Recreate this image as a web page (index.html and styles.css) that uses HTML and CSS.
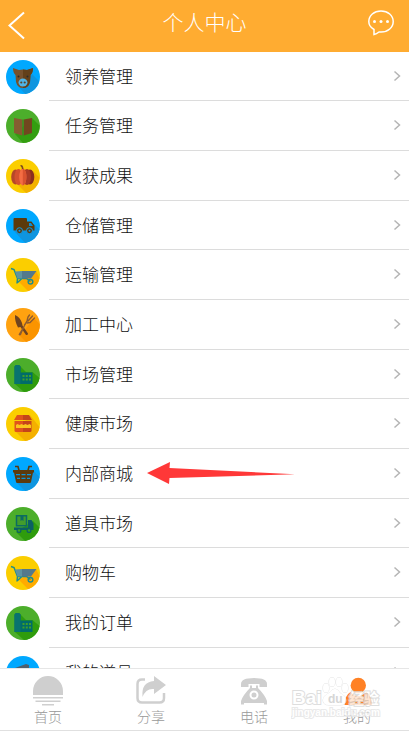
FILE: index.html
```html
<!DOCTYPE html>
<html lang="zh-CN">
<head>
<meta charset="utf-8">
<meta name="viewport" content="width=device-width, initial-scale=1">
<title>个人中心</title>
<link rel="stylesheet" href="styles.css">
</head>
<body>

<!-- icon shapes shared by the list -->
<svg class="defs" aria-hidden="true">
  <symbol id="chev" viewBox="0 0 8 12"><path d="M1.500 1.500 6.500 6l-5 4.500" fill="none" stroke="#b5b5b5" stroke-width="1.500"/></symbol>
  <symbol id="pig" viewBox="0 0 34 34">
    <circle cx="17" cy="17" r="17" fill="#00a8ff"/>
    <path d="M26 14 33 21A17 17 0 0 1 19 34L13 27z" fill="#0f95df"/>
    <path d="M7 8l6 2q4-1 8 0l6-2q0 5-2.500 7l-.5 7q-1.500 6-7 6t-7-6l-.5-7q-2.500-2-2.500-7z" fill="#76512d"/>
    <path d="M17 9.500q2 0 4 .5l6-2q0 5-2.500 7l-.5 7q-1.500 6-7 6z" fill="#634019"/>
    <ellipse cx="17" cy="22.500" rx="4.500" ry="4" fill="#4fb4e6"/>
    <circle cx="15.300" cy="22.500" r="1.100" fill="#5b4328"/><circle cx="18.700" cy="22.500" r="1.100" fill="#5b4328"/>
    <circle cx="12.500" cy="16.500" r="1" fill="#2b2b2b"/><circle cx="21.500" cy="16.500" r="1" fill="#2b2b2b"/>
  </symbol>
  <symbol id="book" viewBox="0 0 34 34">
    <circle cx="17" cy="17" r="17" fill="#4cae2b"/>
    <path d="M26 9l7.500 7.500A17 17 0 0 1 17 34l-8-9z" fill="#339e10"/>
    <path d="M8 9l8.300 1.500v16L8 24z" fill="#855c31"/>
    <path d="M26 9l-8.300 1.500v16L26 24z" fill="#71471f"/>
    <path d="M16.300 10.500h1.400v16h-1.400z" fill="#3d8b20"/>
  </symbol>
  <symbol id="pumpkin" viewBox="0 0 34 34">
    <circle cx="17" cy="17" r="17" fill="#fbce00"/>
    <path d="M27 12l6.500 6.500A17 17 0 0 1 20 34l-9-9z" fill="#f3b200"/>
    <ellipse cx="9.500" cy="18" rx="4.300" ry="7.500" fill="#b5472a"/>
    <ellipse cx="24" cy="18" rx="4.300" ry="7.500" fill="#8b2f1e"/>
    <ellipse cx="12.500" cy="18" rx="4" ry="8" fill="#d4512f"/>
    <ellipse cx="21" cy="18" rx="4" ry="8" fill="#a83a26"/>
    <ellipse cx="16.800" cy="18" rx="3.600" ry="8.500" fill="#f46d43"/>
    <path d="M16.800 9.500q3.600 1 3.600 8.500t-3.600 8.500z" fill="#d9532f"/>
    <path d="M14 6.500l2-.5q1.500 1.500 1.500 4H16q0-2-2-3.500z" fill="#7c4a20"/>
  </symbol>
  <symbol id="truck" viewBox="0 0 34 34">
    <circle cx="17" cy="17" r="17" fill="#00a8ff"/>
    <path d="M28 15l5.500 5.500A17 17 0 0 1 19 34L8 22z" fill="#0f95df"/>
    <path d="M8.500 9H20q1 0 1 1v2.500h4.500l3 4v5H7.500V10q0-1 1-1z" fill="#5c3a0c"/>
    <path d="M23 14h2l2 3h-4z" fill="#0b8fd6"/>
    <g fill="#5c3a0c" stroke="#0b9bea" stroke-width="1"><circle cx="13.500" cy="21.700" r="3"/><circle cx="23.500" cy="21.700" r="3"/></g>
    <g fill="#0b9bea"><circle cx="13.500" cy="21.700" r="1"/><circle cx="23.500" cy="21.700" r="1"/></g>
  </symbol>
  <symbol id="cart" viewBox="0 0 34 34">
    <circle cx="17" cy="17" r="17" fill="#fbce00"/>
    <path d="M30 13l3.500 7A17 17 0 0 1 22 33l-9-9z" fill="#ffab00"/>
    <path d="M5 10.500l3 1 3.500 9-.5 5M11.500 20.500h9l4 3M11 25l5-4.500" fill="none" stroke="#1f8d8b" stroke-width="1.500"/>
    <path d="M9 13.500l7-.5v7.500h-4.500z" fill="#5f93a0"/>
    <path d="M16 13h14.500l-5.500 7.500h-9z" fill="#54798c"/>
    <circle cx="24.500" cy="23.800" r="2.300" fill="none" stroke="#1f8d8b" stroke-width="1.500"/>
  </symbol>
  <symbol id="food" viewBox="0 0 34 34">
    <circle cx="17" cy="17" r="17" fill="#ffa210"/>
    <path d="M28 10l5.500 6A17 17 0 0 1 20 34l-6-6z" fill="#fb9400"/>
    <path d="M9 7q5 2 7 8l.5 2.500L22 25.500q0 2-2 1.500l-5.500-8-2.500.5Q8.500 13 9 7z" fill="#70441f"/>
    <path d="M20 15.500L15 27q-1.500 1-2.500-.5l6-10z" fill="#8d5b30"/>
    <path d="M18.500 17l2.500-4 1-4 1.500-2M21 15l3-.5 4.500-4.500M22 13l4.500-5" fill="none" stroke="#8d5b30" stroke-width="1.400" stroke-linecap="round"/>
  </symbol>
  <symbol id="market" viewBox="0 0 34 34">
    <circle cx="17" cy="17" r="17" fill="#4cae2b"/>
    <path d="M14 8l6 6h6.500l7 6A17 17 0 0 1 18 34l-9-8z" fill="#2f9c0d"/>
    <path d="M8.500 9q0-2 3-2t3 2v5.500h12V26h-18z" fill="#006c69"/>
    <path d="M8.500 9q0-2 3-2t3 2v17h-6z" fill="#08736f"/>
    <path d="M16.500 17h2v2h-2zM19.800 17h2v2h-2zM23 17h2v2h-2zM16.500 20.500h2v2h-2zM19.800 20.500h2v2h-2zM23 20.500h2v2h-2z" fill="#3f9e2a"/>
  </symbol>
  <symbol id="jar" viewBox="0 0 34 34">
    <circle cx="17" cy="17" r="17" fill="#fbce00"/>
    <path d="M24 8l9.500 12A17 17 0 0 1 19 34l-9-9z" fill="#f4b000"/>
    <path d="M11 8h6v5H8z" fill="#e0531c"/><path d="M17 8h6l3 5h-9z" fill="#c4441a"/>
    <path d="M8.500 14H17v11h-7q-1.500 0-1.500-1.500z" fill="#e0531c"/>
    <path d="M17 14h8.500v9.500q0 1.500-1.500 1.500h-7z" fill="#c4441a"/>
    <path d="M10 18l1.500-1 2 1 2-1 2 1 2-1 2 1 2-1 1.500 1v3H10z" fill="#fbc51c"/>
  </symbol>
  <symbol id="basket" viewBox="0 0 34 34">
    <circle cx="17" cy="17" r="17" fill="#00a8ff"/>
    <path d="M28 14l5.500 6A17 17 0 0 1 19 34l-8-8z" fill="#0f95df"/>
    <path d="M9 9.500h3l1 4M26 9.500h-3l-1 4" fill="none" stroke="#5c3a0c" stroke-width="1.600"/>
    <path d="M7 13h21v2.500h-1L25 25q0 1-1.500 1h-12Q10 26 10 25L8 15.500H7z" fill="#5c3a0c"/>
    <path d="M10 17h4v1.300h-4zM15.500 17h4v1.300h-4zM21 17h4v1.300h-4zM11 20.800h3v1.300h-3zM15.500 20.800h4v1.300h-4zM21 20.800h3v1.300h-3z" fill="#0b94dc"/>
  </symbol>
  <symbol id="props" viewBox="0 0 34 34">
    <circle cx="17" cy="17" r="17" fill="#4cae2b"/>
    <path d="M27 14l6.500 6.500A17 17 0 0 1 19 34l-9-9z" fill="#2f9c0d"/>
    <path d="M10.500 8.800h10v10h-10z" fill="#429c2c" stroke="#0b6b62" stroke-width="1.500"/>
    <path d="M14.500 9h3v5l-1.500-1-1.500 1z" fill="#0b6b62"/>
    <path d="M22 13h3.500l2 3.500V23H8v-2.500h14z" fill="#0b6064"/>
    <circle cx="13" cy="23.500" r="1.900" fill="#3b9b25" stroke="#0b6064" stroke-width="1.200"/>
    <circle cx="23" cy="23.500" r="1.900" fill="#3b9b25" stroke="#0b6064" stroke-width="1.200"/>
  </symbol>
  <symbol id="tool" viewBox="0 0 34 34">
    <circle cx="17" cy="17" r="17" fill="#00a8ff"/>
    <path d="M9 12l11-4 3 1v4l-5 2 4 9-3 2-5-10-5 1z" fill="#4f5f6e"/>
  </symbol>
</svg>

<div class="page">
  <header class="bar">
    <button class="bar-btn" aria-label="返回">
      <svg width="18" height="32" viewBox="0 0 18 32"><path d="M16 2.500 1.500 15.500 16 28.500" fill="none" stroke="#fff" stroke-width="2"/></svg>
    </button>
    <h1>个人中心</h1>
    <button class="bar-btn" aria-label="消息">
      <svg width="26" height="27" viewBox="0 0 26 27">
        <path d="M6 19.500C2.500 17.500.8 14.800.8 11.500.8 5.500 6 .9 13 .9s12.200 4.600 12.200 10.600S20 22 13 22h-2q-2.500 2-5 2.600z" fill="none" stroke="#fff" stroke-width="1.500"/>
        <circle cx="6.500" cy="11.500" r="1.500" fill="#fff"/><circle cx="13" cy="11.500" r="1.500" fill="#fff"/><circle cx="19.500" cy="11.500" r="1.500" fill="#fff"/>
      </svg>
    </button>
  </header>

  <main class="list">
    <a class="row" href="#"><svg class="ico"><use href="#pig"/></svg><span class="cell">领养管理<svg class="chev"><use href="#chev"/></svg></span></a>
    <a class="row" href="#"><svg class="ico"><use href="#book"/></svg><span class="cell">任务管理<svg class="chev"><use href="#chev"/></svg></span></a>
    <a class="row" href="#"><svg class="ico"><use href="#pumpkin"/></svg><span class="cell">收获成果<svg class="chev"><use href="#chev"/></svg></span></a>
    <a class="row" href="#"><svg class="ico"><use href="#truck"/></svg><span class="cell">仓储管理<svg class="chev"><use href="#chev"/></svg></span></a>
    <a class="row" href="#"><svg class="ico"><use href="#cart"/></svg><span class="cell">运输管理<svg class="chev"><use href="#chev"/></svg></span></a>
    <a class="row" href="#"><svg class="ico"><use href="#food"/></svg><span class="cell">加工中心<svg class="chev"><use href="#chev"/></svg></span></a>
    <a class="row" href="#"><svg class="ico"><use href="#market"/></svg><span class="cell">市场管理<svg class="chev"><use href="#chev"/></svg></span></a>
    <a class="row" href="#"><svg class="ico"><use href="#jar"/></svg><span class="cell">健康市场<svg class="chev"><use href="#chev"/></svg></span></a>
    <a class="row" href="#"><svg class="ico"><use href="#basket"/></svg><span class="cell">内部商城<svg class="arrow" width="148" height="22" viewBox="0 0 148 22"><path d="M0 11 23 0 22.500 6 148 12.300 22.500 16 22 22z" fill="#ff3838"/></svg><svg class="chev"><use href="#chev"/></svg></span></a>
    <a class="row" href="#"><svg class="ico"><use href="#props"/></svg><span class="cell">道具市场<svg class="chev"><use href="#chev"/></svg></span></a>
    <a class="row" href="#"><svg class="ico"><use href="#cart"/></svg><span class="cell">购物车<svg class="chev"><use href="#chev"/></svg></span></a>
    <a class="row" href="#"><svg class="ico"><use href="#market"/></svg><span class="cell">我的订单<svg class="chev"><use href="#chev"/></svg></span></a>
    <a class="row" href="#"><svg class="ico"><use href="#tool"/></svg><span class="cell">我的道具<svg class="chev"><use href="#chev"/></svg></span></a>
  </main>

  <nav class="tabs">
    <a class="tab" href="#">
      <svg width="30" height="30" viewBox="0 0 30 30" fill="#cfcfcf"><path d="M0 19v-4a15 15 0 0 1 30 0v4zM0 21h30v1.500H0zM2.500 24.500h25V26h-25zM9 28h12v1.500H9z"/></svg>
      首页
    </a>
    <a class="tab" href="#">
      <svg width="30" height="30" viewBox="0 0 30 30"><path d="M9 3.500H6Q1.500 3.500 1.500 8v14q0 4.500 4.500 4.500h17.500q4.500 0 4.500-4.500v-5" fill="none" stroke="#cfcfcf" stroke-width="2.500"/><path d="M18 0l12 9-12 9v-5q-8-1-11.500 8Q5 6 18 5z" fill="#cfcfcf"/></svg>
      分享
    </a>
    <a class="tab" href="#">
      <svg width="30" height="30" viewBox="0 0 30 30"><path d="M2 11V8q0-6 13-6t13 6v3h-7.500V8h-11v3z" fill="#cfcfcf"/><path d="M11 9.500h2V12h4V9.500h2V12q7 7 9 13v3.500h-3V27H5v1.500H2V25q2-6 9-13z" fill="#cfcfcf"/><circle cx="15" cy="19" r="3.500" fill="none" stroke="#fff" stroke-width="2"/></svg>
      电话
    </a>
    <a class="tab" href="#">
      <svg width="30" height="30" viewBox="0 0 30 30" fill="#ff8125"><circle cx="16.300" cy="9.500" r="7.700"/><path d="M8.500 16q3.500 4 7.800 4t7.800-4q5.500 3 6 13H2.500q.5-10 6-13z"/></svg>
      我的
    </a>
    <svg class="mark" width="92" height="48" viewBox="0 0 92 48" aria-hidden="true">
      <g fill="#fff" stroke="#dedede" stroke-width="1">
        <ellipse cx="35" cy="12" rx="3" ry="4.500"/><ellipse cx="41" cy="6" rx="3" ry="4.500"/><ellipse cx="48" cy="6" rx="3" ry="4.500"/><ellipse cx="54" cy="12" rx="3" ry="4.500"/>
        <path d="M44 13q3 0 5 4 6 3 6 7 0 5-6 5H38q-6 0-6-5 0-4 6-7 3-4 6-4z"/>
      </g>
      <text class="mark-name" x="1" y="28">Bai</text>
      <text class="mark-du" x="37" y="27">du</text>
      <text class="mark-cn" x="58" y="28">经验</text>
      <text class="mark-url" x="1" y="40">jingyan.baidu.com</text>
    </svg>
  </nav>
</div>

</body>
</html>
```
FILE: styles.css
```css
* {box-sizing: border-box;}
body {
  margin: 0;
  font-family: "Noto Sans CJK SC", sans-serif;
  background: #fff;
  color: #111;
}
a {text-decoration: none; color: inherit;}
svg {display: block; flex: none;}
.defs {position: absolute; width: 0; height: 0;}

.page {
  display: flex;
  flex-direction: column;
  height: 100vh;
}

/* top bar */
.bar {
  display: grid;
  grid-template-columns: 1fr auto 1fr;
  align-items: start;
  height: 52px;
  flex: none;
  padding: 10px 15px 0 8px;
  background: #ffac31;
  color: #fff;
}
.bar h1 {
  margin: 0;
  padding-left: 7px;
  font-size: 21px;
  line-height: 22px;
  font-weight: 300;
}
.bar-btn {
  padding: 0;
  border: 0;
  background: none;
  cursor: pointer;
  justify-self: start;
}
.bar-btn:last-child {justify-self: end;}

/* menu list */
.list {
  flex: 1;
  min-height: 0;
  overflow-y: auto;
  scrollbar-width: none;
  display: grid;
  grid-template-rows: repeat(5, 49px 50px 50px);
}
.row {
  display: flex;
  align-items: center;
  padding-left: 6px;
}
.ico {width: 34px; height: 34px;}
.cell {
  flex: 1;
  align-self: stretch;
  display: flex;
  align-items: center;
  margin-left: 9px;
  padding: 0 8px 1px 16px;
  border-bottom: 1px solid #dcdcdc;
  font-size: 17px;
  line-height: 24px;
  font-weight: 300;
}
.chev {width: 8px; height: 12px; margin-left: auto;}
.arrow {margin-left: 14px;}

/* bottom tabs */
.tabs {
  position: relative;
  flex: none;
  display: flex;
  justify-content: space-between;
  padding: 7px 11px 6px 7px;
  border-top: 1px solid #e6e6e6;
  border-bottom: 1px solid #e0e0e0;
  background: #fff;
}
.tab {
  width: 82px;
  display: flex;
  flex-direction: column;
  align-items: center;
  gap: 2px;
  font-size: 14px;
  line-height: 16px;
  font-weight: 300;
  color: #999;
}

.mark {
  position: absolute;
  right: 26px;
  top: 7px;
  opacity: .8;
  pointer-events: none;
  font-family: "Liberation Sans", "Noto Sans CJK SC", sans-serif;
  font-weight: bold;
  fill: #fff;
  stroke: #d6d6d6;
  stroke-width: 2px;
  paint-order: stroke;
}
.mark-name {font-size: 19px;}
.mark-cn {font-size: 15px;}
.mark-du {font-size: 12px; fill: #ccc; stroke: none;}
.mark-url {font-size: 10px; stroke: #e4e4e4;}
```
